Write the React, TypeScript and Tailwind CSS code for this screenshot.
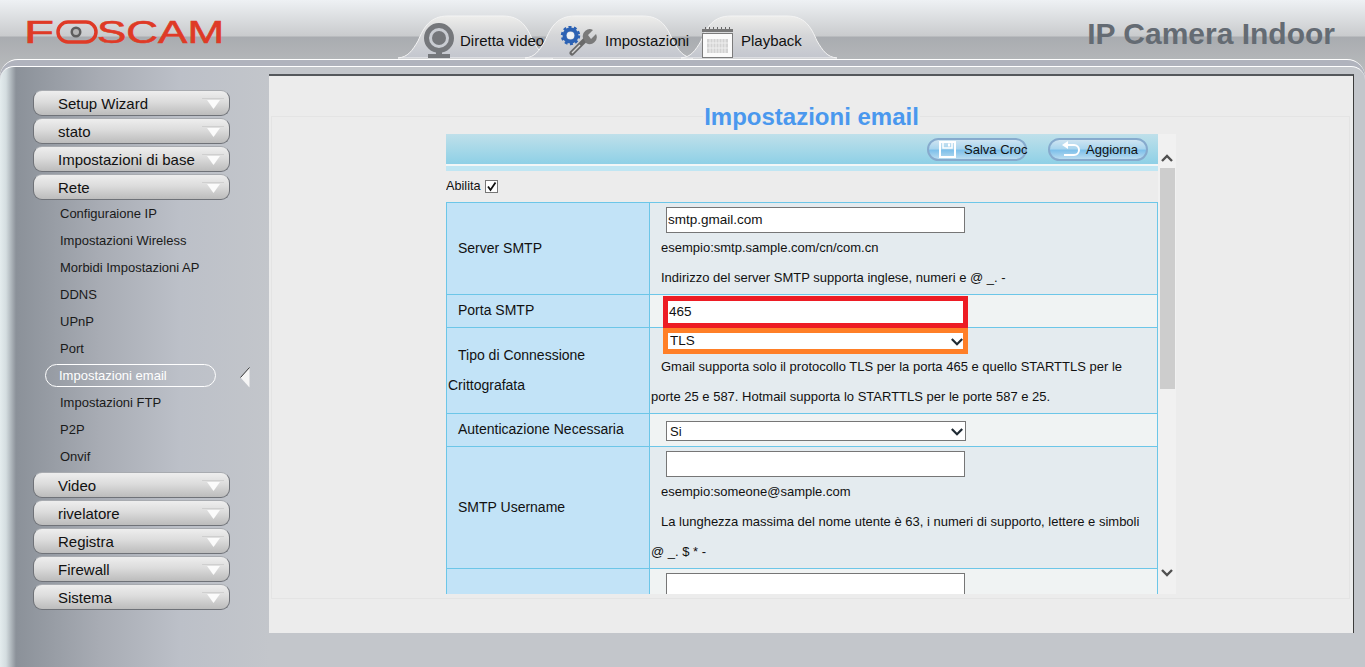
import React from "react";

const font = { fontFamily: '"Liberation Sans", Arial, sans-serif' };

function MenuButton({ label }: { label: string }) {
  return (
    <div className="relative flex items-center h-[26px] w-[197px] ml-[33px] mb-[2px] rounded-[9px] border border-[#6f7278] border-t-[#a8abb0] bg-[linear-gradient(#eeeeee_0%,#dcdcdc_45%,#bcbcbc_100%)] pl-[24px] text-[15px] text-[#111] leading-none">
      <span>{label}</span>
      <svg className="absolute right-[5px] top-[7px]" width="22" height="12" viewBox="0 0 22 12">
        <rect x="0" y="0" width="22" height="1" fill="#cfcfcf" />
        <path d="M5 2 H18 L11.5 11 Z" fill="#fbfbfb" />
      </svg>
    </div>
  );
}

function SubItem({ label, active }: { label: string; active?: boolean }) {
  if (active) {
    return (
      <div className="relative flex items-center h-[23px] my-[2px] ml-[45px] w-[171px] rounded-full border border-white pl-[13px] text-[13px] text-white">
        {label}
        <svg className="absolute left-[194px] top-[2px]" width="10" height="21" viewBox="0 0 10 21">
          <path d="M9.5 0.5 V20.5 L0.5 10.5 Z" fill="#f5f5f5" />
          <path d="M9.5 0.5 L0.5 10.5" stroke="#333" strokeWidth="1" fill="none" />
        </svg>
      </div>
    );
  }
  return <div className="flex items-center h-[27px] pl-[60px] text-[13px] text-[#1a1a1a]">{label}</div>;
}

function Row({ h, alt, label, children }: { h: number; alt?: boolean; label: React.ReactNode; children: React.ReactNode }) {
  return (
    <div className="flex border-t border-[#6cc6e8] shrink-0" style={{ height: h }}>
      <div className="w-[203px] shrink-0 flex items-center bg-[#c2e3f7] border-r border-[#6cc6e8] text-[14px] text-[#111]">{label}</div>
      <div className={alt ? "flex-1 bg-[#f0f3f3] text-[13px]" : "flex-1 bg-[#e4ebef] text-[13px]"}>{children}</div>
    </div>
  );
}

const txt = "h-[30px] leading-[30px] text-[13px] text-[#111] whitespace-nowrap";

function Chevron({ className }: { className: string }) {
  return (
    <svg className={`absolute pointer-events-none ${className}`} width="12" height="8" viewBox="0 0 12 8">
      <path d="M0.8 1 L6 6.2 L11.2 1" fill="none" stroke="#1f2a33" strokeWidth="2.2" />
    </svg>
  );
}

function Webcam() {
  return (
    <svg width="34" height="36" viewBox="0 0 34 36">
      <circle cx="17" cy="16" r="12.5" fill="#c9ccd2" stroke="#75777b" strokeWidth="5" />
      <circle cx="17" cy="16" r="7" fill="#75777b" />
      <rect x="14" y="30" width="6" height="3" fill="#75777b" />
      <rect x="6" y="32" width="22" height="4" fill="#75777b" />
    </svg>
  );
}

function Tools() {
  return (
    <svg width="38" height="30" viewBox="0 0 38 30">
      <circle cx="10.5" cy="9.5" r="6" fill="none" stroke="#2c62b4" strokeWidth="4" />
      <circle cx="10.5" cy="9.5" r="8.5" fill="none" stroke="#2c62b4" strokeWidth="2.4" strokeDasharray="3 2.4" />
      <circle cx="10.5" cy="9.5" r="3.6" fill="#eef2f6" />
      <path d="M12 27 L26 13" stroke="#6a6a6a" strokeWidth="5" strokeLinecap="round" />
      <path d="M12 27 L20 19" stroke="#d8d8d8" strokeWidth="1.5" />
      <path d="M23 12 A7 7 0 0 1 33 4 L28 9 L31 13 L36 8 A7 7 0 0 1 26 17 Z" fill="#7a7a7a" />
    </svg>
  );
}

function Calendar() {
  return (
    <svg width="32" height="33" viewBox="0 0 32 33">
      <rect x="0" y="4" width="31" height="3" fill="#777" />
      <path d="M3 3h1M7 3h1M11 3h1M15 3h1M19 3h1M23 3h1M27 3h1" stroke="#666" strokeWidth="2" />
      <rect x="0.5" y="8.5" width="30" height="24" fill="#fafafa" stroke="#7b7b7b" />
      <rect x="5" y="14" width="21" height="14" fill="#d2d2d2" />
      <path d="M8 14v14M11 14v14M14 14v14M17 14v14M20 14v14M23 14v14M5 18h21M5 23h21" stroke="#efefef" strokeWidth="1" />
    </svg>
  );
}

function Tab({ w, ml, children, z }: { w: number; ml: number; z: string; children: React.ReactNode }) {
  return (
    <div className={`relative h-[44px] shrink-0 ${z}`} style={{ width: w, marginLeft: ml }}>
      <svg className="absolute inset-0" width={w} height="44" viewBox={`0 0 ${w} 44`} preserveAspectRatio="none">
        <defs>
          <linearGradient id="tabg" x1="0" x2="0" y1="0" y2="1">
            <stop offset="0" stopColor="#eeeeec" />
            <stop offset="0.45" stopColor="#d5d6d8" />
            <stop offset="1" stopColor="#c3c6ce" />
          </linearGradient>
        </defs>
        <path
          d={`M0 43 C10 42 14 36 20 26 C26 12 32 1 50 1 L${w - 50} 1 C${w - 32} 1 ${w - 26} 12 ${w - 20} 26 C${w - 14} 36 ${w - 10} 42 ${w} 43 Z`}
          fill="url(#tabg)"
          stroke="#f4f4f4"
          strokeWidth="1"
        />
      </svg>
      <div className="relative h-full">{children}</div>
    </div>
  );
}

function Pill({ children, label, gap }: { children: React.ReactNode; label: string; gap: string }) {
  return (
    <div className="flex items-center w-[100px] h-[23px] rounded-full border-2 border-[#86aacd] bg-[linear-gradient(#cfe4f1_0%,#a9d5ee_45%,#7fc0ea_55%,#b9dcf0_100%)] pl-[10px] text-[13px] text-[#111]">
      <span className="w-[17px] h-[17px] shrink-0">{children}</span>
      <span className={`${gap} pt-[1px] whitespace-nowrap`}>{label}</span>
    </div>
  );
}

const top = ["Setup Wizard", "stato", "Impostazioni di base", "Rete"];
const sub = ["Configuraione IP", "Impostazioni Wireless", "Morbidi Impostazioni AP", "DDNS", "UPnP", "Port"];
const sub2 = ["Impostazioni FTP", "P2P", "Onvif"];
const bottom = ["Video", "rivelatore", "Registra", "Firewall", "Sistema"];

export default function App() {
  return (
    <div
      className="w-[1365px] h-[667px] overflow-hidden bg-[linear-gradient(#eef1f4_0px,#c9cbcd_36px,#a9acb0_37px,#b9bbbd_72px)]"
      style={font}
    >
      {/* header */}
      <div className="relative flex h-[59px] items-start">
        <svg className="ml-[26px] mt-[18px] shrink-0" width="198" height="28" viewBox="0 0 198 28">
          <g fontFamily="'Liberation Sans', sans-serif" fontSize="32" fill="#df3a26" stroke="#df3a26" strokeWidth="0.6">
            <text x="-2" y="25" textLength="30" lengthAdjust="spacingAndGlyphs">F</text>
            <text x="30" y="25" textLength="40" lengthAdjust="spacingAndGlyphs" fill="transparent" stroke="none">O</text>
            <text x="71" y="25" textLength="127" lengthAdjust="spacingAndGlyphs">SCAM</text>
          </g>
          <rect x="32" y="4" width="38" height="20" rx="10" fill="none" stroke="#df3a26" strokeWidth="3.5" />
          <circle cx="50" cy="14" r="5.5" fill="#5e5e5e" />
          <circle cx="50" cy="14" r="3" fill="#b5b5b5" />
        </svg>
        <div className="flex mt-[15px] ml-[174px]">
          <Tab w={155} ml={0} z="z-10">
            <div className="flex items-center h-full pl-[24px] pt-[8px] text-[15px] text-[#111] whitespace-nowrap">
              <span className="mt-[-2px] flex"><Webcam /></span>
              <span className="ml-[4px]">Diretta video</span>
            </div>
          </Tab>
          <Tab w={168} ml={-28} z="z-20">
            <div className="flex items-center h-full pl-[35px] pt-[8px] text-[15px] text-[#111] whitespace-nowrap">
              <Tools />
              <span className="ml-[7px]">Impostazioni</span>
            </div>
          </Tab>
          <Tab w={156} ml={-12} z="z-30">
            <div className="flex items-center h-full pl-[21px] pt-[8px] text-[15px] text-[#111] whitespace-nowrap">
              <Calendar />
              <span className="ml-[7px]">Playback</span>
            </div>
          </Tab>
        </div>
        <div className="ml-auto mr-[30px] mt-[17px] text-[30px] leading-[34px] font-bold text-[#646b73] whitespace-nowrap">IP Camera Indoor</div>
      </div>

      {/* shell */}
      <div className="h-[608px] rounded-t-[18px] border-t border-white bg-[#b0b3bd] pt-[6px]">
        <div className="flex h-[601px] rounded-t-[14px] border-t border-white bg-[linear-gradient(90deg,#e4ecee_0px,#d4dde0_6px,#8b9199_16px,#a8acb4_100px,#bcc0c8_180px,#c3c6cb_270px)]">
          {/* sidebar */}
          <div className="w-[269px] shrink-0 pt-[23px]">
            {top.map((t) => (
              <MenuButton key={t} label={t} />
            ))}
            <div className="-mt-[2px] mb-[2px]">
              {sub.map((s) => (
                <SubItem key={s} label={s} />
              ))}
              <SubItem label="Impostazioni email" active />
              {sub2.map((s) => (
                <SubItem key={s} label={s} />
              ))}
            </div>
            {bottom.map((t) => (
              <MenuButton key={t} label={t} />
            ))}
          </div>

          {/* panel */}
          <div className="mt-[7px] h-[559px] w-[1085px] border-t-2 border-t-[#55585c] border-r border-r-[#3c3c3c] bg-[#ececec] px-[2px] pt-[40px]">
            <div className="h-[483px] w-[1079px] border border-[#e4e4e4]">
              <div className="mx-auto -mt-[15px] h-[30px] w-fit bg-[#ececec] px-[1px] text-[24px] leading-[30px] font-bold text-[#4a98ee] relative left-[1px]">
                Impostazioni email
              </div>
              <div className="flex ml-[174px] mt-[2px] h-[460px] w-[730px]">
                <div className="w-[712px] h-[460px] overflow-hidden flex flex-col">
                  <div className="flex items-center justify-end gap-[21px] pr-[10px] h-[30px] shrink-0 bg-[linear-gradient(#bfe0ea,#8ed0e6)]">
                    <Pill label="Salva Croc" gap="ml-[8px]">
                      <svg width="17" height="17" viewBox="0 0 17 17">
                        <path d="M1 1 H16 V16 H1 Z" fill="none" stroke="#fff" strokeWidth="2" />
                        <path d="M4 1 H13 V7 H4 Z" fill="none" stroke="#fff" strokeWidth="1.5" />
                        <rect x="9" y="2.5" width="2" height="3" fill="#fff" />
                      </svg>
                    </Pill>
                    <Pill label="Aggiorna" gap="ml-[9px]">
                      <svg width="20" height="17" viewBox="0 0 20 17">
                        <path d="M7 4 H14 A5 5 0 0 1 14 14 H4" fill="none" stroke="#fff" strokeWidth="2" />
                        <path d="M8 0 L2 4 L8 8 Z" fill="#fff" />
                      </svg>
                    </Pill>
                  </div>
                  <div className="h-[2px] shrink-0 bg-[#f2f6f7]" />
                  <div className="h-[5px] shrink-0 bg-[#c0e6f3]" />
                  <div className="flex items-center h-[31px] shrink-0 text-[12.7px] text-[#111]">
                    Abilita
                    <span className="ml-[4px] mt-[-1px] flex h-[13px] w-[13px] items-center justify-center border border-[#767676] bg-white">
                      <svg width="11" height="11" viewBox="0 0 11 11">
                        <path d="M2 5.5 L4.5 9 L9.5 1.5" fill="none" stroke="#111" strokeWidth="1.8" />
                      </svg>
                    </span>
                  </div>
                  <div className="border-x border-[#6cc6e8] flex flex-col">
                    <Row h={92} label={<span className="pl-[11px]">Server SMTP</span>}>
                      <div className="pt-[4px]">
                        <input readOnly value="smtp.gmail.com" className="block ml-[16px] w-[299px] h-[26px] border border-[#767676] bg-white px-[1px] pb-[2px] text-[13.5px] text-[#111] outline-none" />
                        <div className={`${txt} pl-[11px]`}>esempio:smtp.sample.com/cn/com.cn</div>
                        <div className={`${txt} pl-[11px]`}>Indirizzo del server SMTP supporta inglese, numeri e @ _. -</div>
                      </div>
                    </Row>
                    <Row h={33} alt label={<span className="pl-[11px] pb-[2px]">Porta SMTP</span>}>
                      <div className="relative z-10 ml-[13px] mt-[1px] h-[32px] w-[305px] border-[5px] border-[#ed1c24] bg-white px-[1px] text-[13.5px] leading-[22px] text-[#111]">465</div>
                    </Row>
                    <Row
                      h={86}
                      label={
                        <div className="leading-[30px] pb-[2px]">
                          <div className="pl-[11px]">Tipo di Connessione</div>
                          <div className="pl-[1px]">Crittografata</div>
                        </div>
                      }
                    >
                      <div className="ml-[13px] h-[26px] w-[305px] border-[5px] border-[#ff7f27] bg-white relative z-20">
                        <select className="block h-[16px] w-full appearance-none bg-white pl-[2px] text-[13.5px] leading-[16px] text-[#111] outline-none">
                          <option>TLS</option>
                        </select>
                        <Chevron className="right-0 top-[5px]" />
                      </div>
                      <div className="mt-[-2px] pr-[20px] leading-[30px] text-[13px] text-[#111] pl-[1px] indent-[10px]">
                        Gmail supporta solo il protocollo TLS per la porta 465 e quello STARTTLS per le porte 25 e 587. Hotmail supporta lo STARTTLS per le porte 587 e 25.
                      </div>
                    </Row>
                    <Row h={33} alt label={<span className="pl-[11px] pb-[2px]">Autenticazione Necessaria</span>}>
                      <div className="relative ml-[16px] mt-[7px] w-[300px]">
                        <select className="block h-[20px] w-full appearance-none border border-[#767676] bg-white pl-[3px] pb-[2px] text-[13px] text-[#111] outline-none">
                          <option>Si</option>
                        </select>
                        <Chevron className="right-[3px] top-[7px]" />
                      </div>
                    </Row>
                    <Row h={122} label={<span className="pl-[11px]">SMTP Username</span>}>
                      <div className="pt-[4px]">
                        <input readOnly className="block ml-[16px] w-[299px] h-[26px] border border-[#767676] bg-white outline-none" />
                        <div className={`${txt} pl-[11px]`}>esempio:someone@sample.com</div>
                        <div className="pr-[15px] leading-[30px] text-[13px] text-[#111] pl-[1px] indent-[10px]">
                          La lunghezza massima del nome utente è 63, i numeri di supporto, lettere e simboli @ _. $ * -
                        </div>
                      </div>
                    </Row>
                    <Row h={40} alt label="">
                      <input readOnly className="block ml-[16px] mt-[4px] w-[299px] h-[26px] border border-[#767676] bg-white outline-none" />
                    </Row>
                  </div>
                </div>
                {/* scrollbar */}
                <div className="flex w-[18px] flex-col items-center bg-[#f1f1f1]">
                  <div className="flex h-[34px] w-full items-end justify-center pb-[6px]">
                    <svg width="12" height="8" viewBox="0 0 12 8">
                      <path d="M1 7 L6 2 L11 7" fill="none" stroke="#505050" strokeWidth="2.4" />
                    </svg>
                  </div>
                  <div className="h-[221px] w-[15px] bg-[#cdcdcd]" />
                  <div className="flex flex-1 w-full items-end justify-center pb-[17px]">
                    <svg width="12" height="8" viewBox="0 0 12 8">
                      <path d="M1 1 L6 6 L11 1" fill="none" stroke="#505050" strokeWidth="2.4" />
                    </svg>
                  </div>
                </div>
              </div>
            </div>
          </div>
        </div>
      </div>
    </div>
  );
}
